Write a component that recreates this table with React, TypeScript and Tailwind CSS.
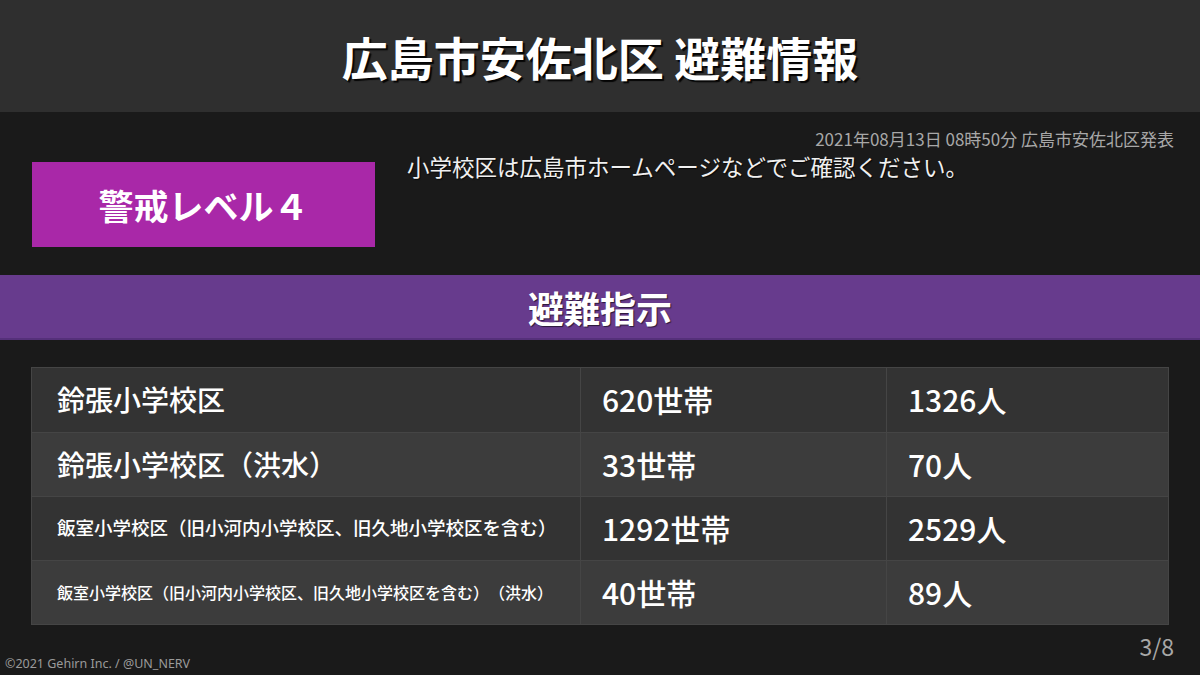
const rows = [
  { area: '鈴張小学校区', size: 'text-[28px]', households: '620世帯', people: '1326人', bg: 'bg-[#333333]' },
  { area: '鈴張小学校区（洪水）', size: 'text-[28px]', households: '33世帯', people: '70人', bg: 'bg-[#3c3c3c]' },
  { area: '飯室小学校区（旧小河内小学校区、旧久地小学校区を含む）', size: 'text-[18.5px]', households: '1292世帯', people: '2529人', bg: 'bg-[#333333]' },
  { area: '飯室小学校区（旧小河内小学校区、旧久地小学校区を含む）（洪水）', size: 'text-[16px]', households: '40世帯', people: '89人', bg: 'bg-[#3c3c3c]' },
]

const font = "font-['Noto_Sans_CJK_JP','Noto_Sans',sans-serif]"

export default function App() {
  return (
    <div className={`relative flex h-[675px] w-[1200px] flex-col overflow-hidden bg-[#1a1a1a] text-white [text-spacing-trim:space-all] ${font}`}>
      {/* header */}
      <header className="flex h-[112px] shrink-0 items-center justify-center bg-[#2f2f2f]">
        <h1 className="text-[46px] font-bold leading-none [text-shadow:2px_2px_1px_rgba(0,0,0,0.9)]">
          広島市安佐北区 避難情報
        </h1>
      </header>

      {/* issued */}
      <div className="h-[38px] pr-[26px] pt-[15px] text-right text-[17px] leading-[23px] text-[#a8a8a8]">
        2021年08月13日 08時50分 広島市安佐北区発表
      </div>

      <div className="flex items-start">
        <div className="ml-[32px] mt-[12px] flex h-[85px] w-[343px] items-center justify-center bg-[#a928a8]">
          <span className="text-[35px] font-bold leading-none">警戒レベル４</span>
        </div>
        <p className="ml-[32px] text-[22.5px] leading-[33px] text-[#f0f0f0] [text-shadow:1px_1px_1px_rgba(0,0,0,0.8)]">
          小学校区は広島市ホームページなどでご確認ください。
        </p>
      </div>

      {/* level band */}
      <div className="mt-[28px] flex h-[65px] items-center justify-center border-b-2 border-[#55307a] bg-[#673b8d]">
        <span className="text-[36px] font-bold leading-none [text-shadow:1px_1px_1px_rgba(0,0,0,0.6)]">避難指示</span>
      </div>

      {/* table */}
      <div className="ml-[31px] mt-[27px] w-[1138px] border border-[#454545]">
        {rows.map((r, i) => (
          <div
            key={i}
            className={`grid h-[64px] grid-cols-[548px_306px_1fr] ${r.bg} ${i > 0 ? 'border-t border-[#454545]' : ''}`}
          >
            <div className={`flex items-center pl-[25px] pb-[2px] ${r.size} font-medium leading-none`}>{r.area}</div>
            <div className="flex items-center border-l border-[#454545] pb-[2px] pl-[21px] text-[30px] font-medium leading-none">{r.households}</div>
            <div className="flex items-center border-l border-[#454545] pb-[2px] pl-[21px] text-[30px] font-medium leading-none">{r.people}</div>
          </div>
        ))}
      </div>

      <div className="mt-[8px] pr-[26px] text-right text-[23px] leading-[26px] text-[#a8a8a8]">3/8</div>

      <div className="absolute bottom-[2px] left-[5px] font-['Noto_Sans',sans-serif] text-[12.5px] leading-[18px] text-[#9a9a9a]">
        ©2021 Gehirn Inc. / @UN_NERV
      </div>
    </div>
  )
}
